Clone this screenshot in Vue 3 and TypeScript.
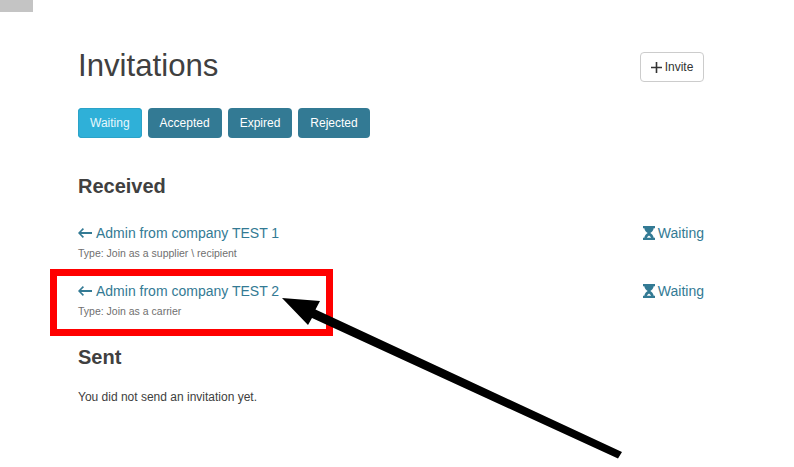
<template>
  <div class="page">
    <div class="corner"></div>

    <main class="content">
      <header class="head">
        <h1>Invitations</h1>
        <button class="invite" type="button">
          <svg class="plus" viewBox="0 0 11 11" aria-hidden="true">
            <path d="M4.700 0h1.600v4.700H11v1.600H6.300V11H4.700V6.300H0V4.700h4.700z" />
          </svg>
          <span class="invite-label">Invite</span>
        </button>
      </header>

      <nav class="tabs">
        <button
          v-for="tab in tabs"
          :key="tab"
          class="tab"
          :class="{ active: tab === 'Waiting' }"
          type="button"
        >
          {{ tab }}
        </button>
      </nav>

      <h2 class="received">Received</h2>
      <div v-for="item in received" :key="item.name" class="row">
        <div>
          <a class="link">
            <svg class="back" viewBox="0 0 14 10" aria-hidden="true">
              <path d="M0 5l4.800-5 1.200 1.200L3.100 4.100H14v1.800H3.100L6 8.800 4.800 10z" />
            </svg>
            {{ item.name }}
          </a>
          <p class="type">{{ item.type }}</p>
        </div>
        <a class="link status">
          <svg class="glass" viewBox="0 0 12 14" aria-hidden="true">
            <path d="M0 0h12v2.200h-1.300C10.500 4.600 8.600 6 7.300 7c1.300 1 3.200 2.400 3.400 4.800H12V14H0v-2.200h1.300C1.500 9.400 3.400 8 4.700 7 3.400 6 1.500 4.600 1.300 2.200H0zM4 11.800h4C7.700 10.800 6.700 10 6 9.500 5.300 10 4.300 10.800 4 11.800z" fill-rule="evenodd" />
          </svg>
          Waiting
        </a>
      </div>

      <h2 class="sent">Sent</h2>
      <p class="empty">You did not send an invitation yet.</p>
    </main>

    <!-- annotation drawn over the screenshot -->
    <svg class="marks" viewBox="0 0 794 467" aria-hidden="true">
      <rect x="53.500" y="272.500" width="276" height="60" fill="none" stroke="#ff0000" stroke-width="7" />
      <path d="M282 298L320 301L315.500 309.500L622 452L618 458.500L312 318L308 325z" fill="#000" />
    </svg>
  </div>
</template>

<script setup lang="ts">
const tabs: string[] = ['Waiting', 'Accepted', 'Expired', 'Rejected']

const received = [
  { name: 'Admin from company TEST 1', type: 'Type: Join as a supplier \\ recipient' },
  { name: 'Admin from company TEST 2', type: 'Type: Join as a carrier' }
]
</script>

<style>
html,
body {
  margin: 0;
  background: #fff;
}
</style>

<style scoped>
.page {
  position: relative;
  width: 794px;
  height: 467px;
  overflow: hidden;
  font-family: "Liberation Sans", Arial, sans-serif;
  color: #404040;
}
.corner {
  width: 33px;
  height: 12px;
  background: #c4c4c4;
}
.content {
  padding: 40px 90px 0 78px;
}
.head {
  display: flex;
  justify-content: space-between;
  align-items: center;
  height: 30px;
}
h1 {
  margin: -2px 0 0;
  font-size: 31.200px;
  font-weight: 400;
  line-height: 30px;
}
.invite {
  display: flex;
  align-items: center;
  justify-content: center;
  gap: 3px;
  width: 64px;
  height: 30px;
  padding: 0;
  background: #fff;
  border: 1px solid #ccc;
  border-radius: 4px;
  font: 12px "Liberation Sans", Arial, sans-serif;
  color: #333;
}
.invite-label {
  margin-top: -1px;
}
.plus {
  width: 11px;
  height: 11px;
  fill: #333;
}
.tabs {
  display: flex;
  gap: 6px;
  margin-top: 26px;
}
.tab {
  height: 30px;
  padding: 0 12px;
  border: 0;
  border-radius: 4px;
  background: #337a94;
  color: #fff;
  font: 12px "Liberation Sans", Arial, sans-serif;
}
.tab.active {
  background: #2fb0d8;
  box-shadow: inset 0 0 0 1px #2ba3c8;
  color: #e8f8fd;
}
h2 {
  margin: 0;
  font-size: 20px;
  font-weight: 700;
  line-height: 22px;
}
.received {
  margin: 37px 0 26px;
}
.row {
  display: flex;
  justify-content: space-between;
  align-items: flex-start;
  height: 58px;
}
.link {
  display: inline-flex;
  align-items: center;
  gap: 4px;
  font-size: 14px;
  line-height: 20px;
  color: #337a94;
}
.status {
  gap: 3px;
}
.back {
  width: 14px;
  height: 10px;
  fill: #337a94;
}
.glass {
  width: 12px;
  height: 14px;
  fill: #337a94;
}
.type {
  margin: 4px 0 0;
  font-size: 10.500px;
  line-height: 12px;
  color: #6f6f6f;
}
.sent {
  margin-top: 7px;
}
.empty {
  margin: 21px 0 0;
  font-size: 12px;
  line-height: 16px;
  color: #404040;
}
.marks {
  position: absolute;
  inset: 0;
  width: 794px;
  height: 467px;
}
</style>
